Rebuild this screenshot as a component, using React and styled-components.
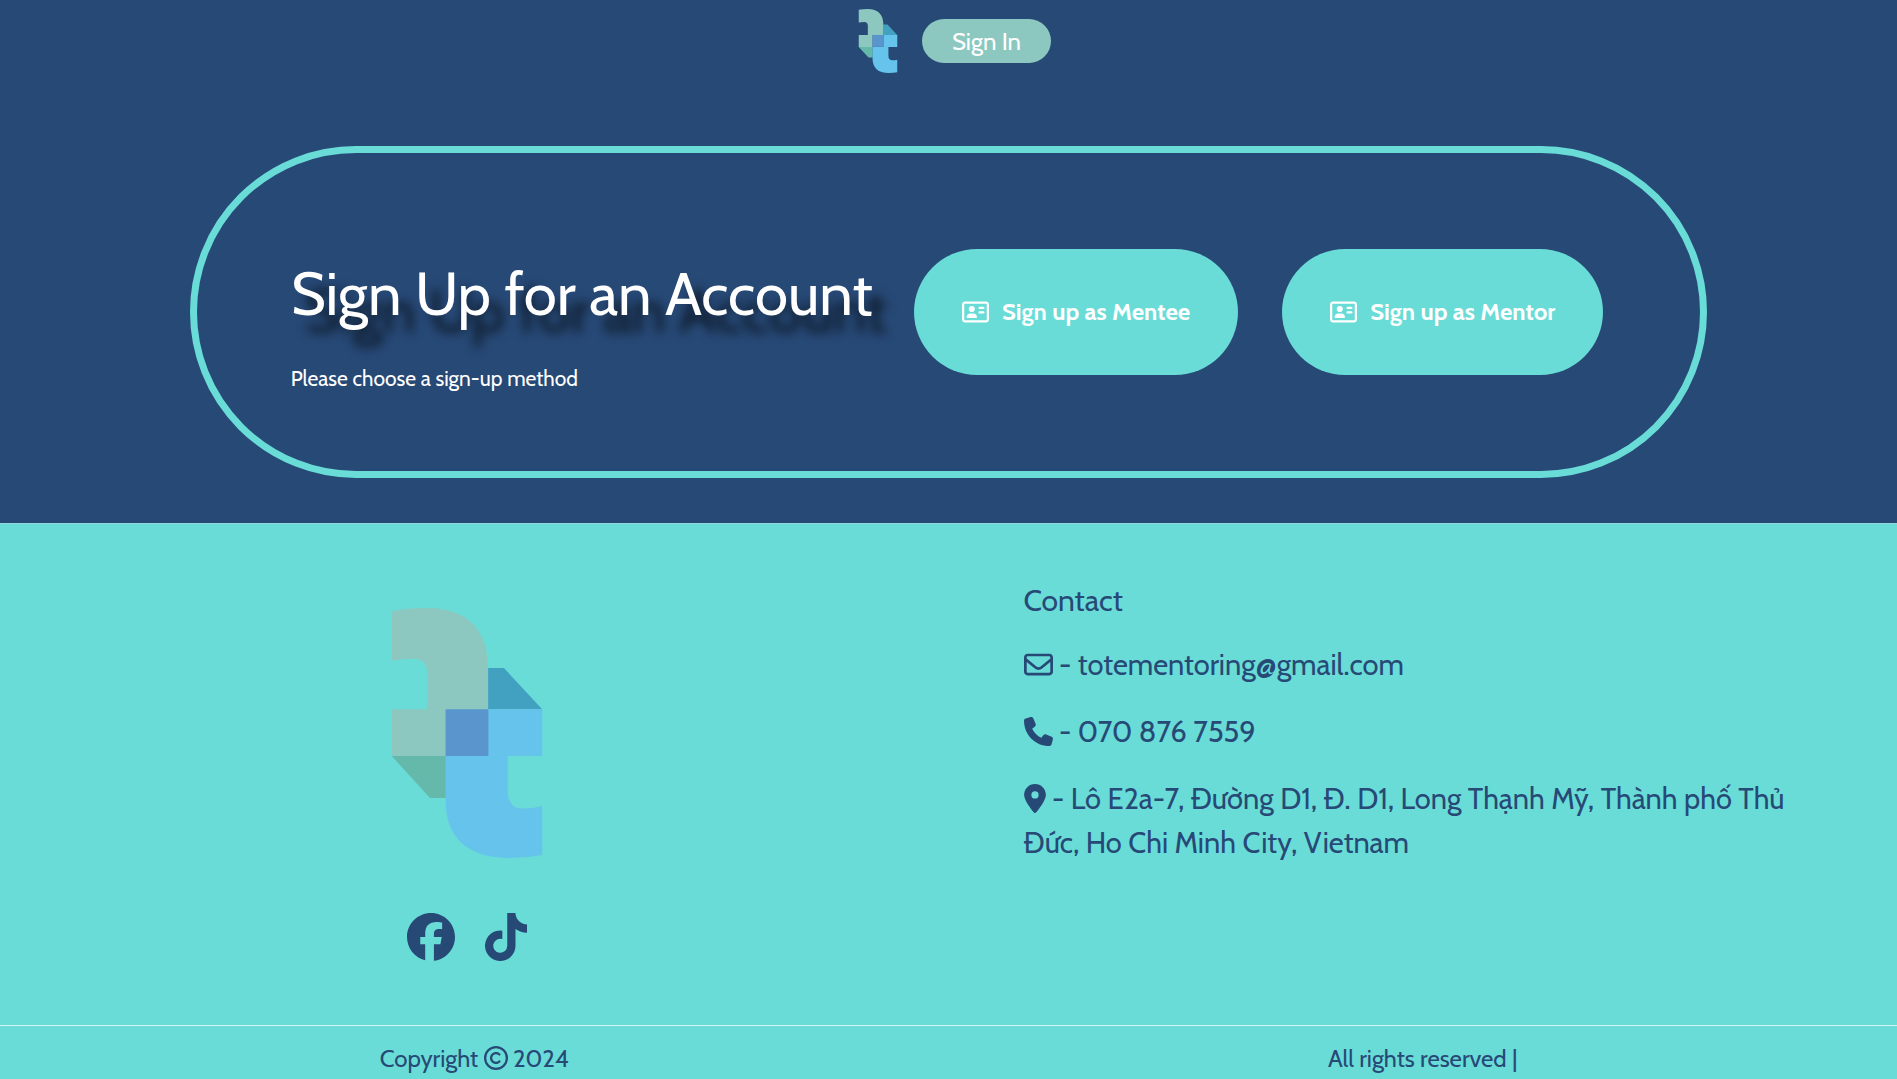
import React from "react";
import styled, { createGlobalStyle } from "styled-components";
import {
  FaFacebook,
  FaLocationDot,
  FaPhone,
  FaRegAddressCard,
  FaRegCopyright,
  FaRegEnvelope,
  FaTiktok,
} from "react-icons/fa6";

const navy = "#274976";
const aqua = "#69dcd7";
const sage = "#8cc8c0";

const GlobalStyle = createGlobalStyle`
  *, *::before, *::after { box-sizing: border-box; }
  body {
    margin: 0;
    background: ${navy};
    color: #fff;
    font-family: Cabin, Lato, "Noto Sans", sans-serif;
  }
  h1, h2, p { margin: 0; font-weight: 400; }
  a { color: inherit; text-decoration: none; }
`;

const Header = styled.header`
  display: flex;
  justify-content: center;
  align-items: center;
  gap: 12px;
  padding: 9px 0;
`;

const LogoSvg = styled.svg`
  display: block;
  width: ${(p) => p.$size}px;
  height: ${(p) => p.$size}px;
`;

const SignInButton = styled.button`
  height: 44px;
  padding: 0 30px;
  border: 0;
  border-radius: 22px;
  background: ${sage};
  color: #fff;
  font: inherit;
  font-size: 24px;
  cursor: pointer;
`;

const Card = styled.main`
  display: flex;
  align-items: center;
  justify-content: space-between;
  gap: 24px;
  width: 80%;
  min-height: 332px;
  margin: 64px auto 45px;
  padding: 0 97px 0 94px;
  border: 7px solid ${aqua};
  border-radius: 166px;
`;

const Intro = styled.div`
  padding-top: 28px;
`;

const Title = styled.h1`
  font-size: 60px;
  line-height: 72px;
  white-space: nowrap;
  text-shadow: 14px 17px 11px rgba(0, 0, 0, 0.75);
`;

const Subtitle = styled.p`
  margin-top: 33px;
  font-size: 21px;
  line-height: 32px;
`;

const Choices = styled.div`
  display: flex;
  gap: 44px;
`;

const ChoiceButton = styled.button`
  display: flex;
  align-items: center;
  gap: 13px;
  height: 126px;
  padding: 0 48px;
  border: 0;
  border-radius: 63px;
  background: ${aqua};
  color: #fff;
  font: inherit;
  font-size: 24px;
  line-height: 28px;
  font-weight: 700;
  white-space: nowrap;
  cursor: pointer;

  svg { width: 27px; height: 24px; }
`;

const Footer = styled.footer`
  background: ${aqua};
  color: ${navy};
  border-top: 1px solid #8fd9e0;
`;

const FooterMain = styled.div`
  display: grid;
  grid-template-columns: 1fr 1fr;
`;

const Brand = styled.div`
  display: flex;
  flex-direction: column;
  align-items: center;
  gap: 55px;
  padding: 84px 15px 64px 0;
`;

const Socials = styled.nav`
  display: flex;
  gap: 30px;

  a { display: block; height: 48px; }
`;

const SocialIcon = styled.svg`
  display: block;
  width: ${(p) => p.$width}px;
  height: 48px;
`;

const Contact = styled.address`
  display: flex;
  flex-direction: column;
  gap: 23px;
  padding: 58px 75px 0;
  font-style: normal;
`;

const ContactTitle = styled.h2`
  font-size: 30px;
  line-height: 38px;
`;

const ContactLine = styled.p`
  font-size: 29px;
  line-height: 44px;

  svg {
    width: ${(p) => p.$iconWidth || 29}px;
    height: 29px;
    vertical-align: -4px;
  }
`;

const Legal = styled.div`
  display: grid;
  grid-template-columns: 1fr 1fr;
  padding: 15px 0 2px;
  border-top: 1px solid #d3f5f3;
  text-align: center;
  font-size: 24px;
  line-height: 36px;

  svg { vertical-align: -3px; }
`;

function Logo({ size }) {
  return (
    <LogoSvg $size={size} viewBox="-85 52 753 753" role="img" aria-label="Tote Mentoring">
      <path fill="#42a0c1" d="M355 233H403L518 357H355Z" />
      <path fill="#64b9aa" d="M65 498H228V624H180Z" />
      <path
        fill={sage}
        d="M65 62Q110 52 170 52C290 52 355 115 355 235V358H228V498H65V357H172V250Q172 205 130 205Q95 205 65 212Z"
      />
      <path
        fill="#66c3ec"
        d="M355 357H518V498H414V600Q414 656 460 656Q490 656 518 648V796Q470 805 420 805C290 805 227 740 227 630V498H355Z"
      />
      <path fill="#5a95cd" d="M227 357H356V498H227Z" />
    </LogoSvg>
  );
}

export default function App() {
  return (
    <>
      <GlobalStyle />
      <Header>
        <a href="#home"><Logo size={64} /></a>
        <SignInButton type="button">Sign In</SignInButton>
      </Header>

      <Card>
        <Intro>
          <Title>Sign Up for an Account</Title>
          <Subtitle>Please choose a sign-up method</Subtitle>
        </Intro>
        <Choices>
          <ChoiceButton type="button"><FaRegAddressCard />Sign up as Mentee</ChoiceButton>
          <ChoiceButton type="button"><FaRegAddressCard />Sign up as Mentor</ChoiceButton>
        </Choices>
      </Card>

      <Footer>
        <FooterMain>
          <Brand>
            <Logo size={250} />
            <Socials>
              <a href="#facebook" aria-label="Facebook"><SocialIcon as={FaFacebook} $width={48} /></a>
              <a href="#tiktok" aria-label="TikTok"><SocialIcon as={FaTiktok} $width={42} /></a>
            </Socials>
          </Brand>
          <Contact>
            <ContactTitle>Contact</ContactTitle>
            <ContactLine>
              <FaRegEnvelope /> - <a href="mailto:totementoring@gmail.com">totementoring@gmail.com</a>
            </ContactLine>
            <ContactLine>
              <FaPhone /> - <a href="tel:0708767559">070 876 7559</a>
            </ContactLine>
            <ContactLine $iconWidth={22}>
              <FaLocationDot /> - Lô E2a-7, Đường D1, Đ. D1, Long Thạnh Mỹ, Thành phố Thủ Đức, Ho Chi Minh City, Vietnam
            </ContactLine>
          </Contact>
        </FooterMain>
        <Legal>
          <p>Copyright <FaRegCopyright /> 2024</p>
          <p>All rights reserved |</p>
        </Legal>
      </Footer>
    </>
  );
}
